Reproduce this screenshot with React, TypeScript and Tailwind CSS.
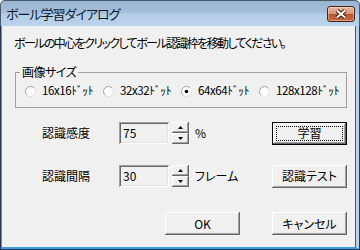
const raised =
  'bg-[#f0f0f0] shadow-[inset_-1px_-1px_#696969,inset_1px_1px_#ffffff,inset_-2px_-2px_#a0a0a0,inset_2px_2px_#f0f0f0]';

function Button({ label, isDefault }: { label: string; isDefault?: boolean }) {
  if (isDefault) {
    return (
      <div className="w-[75px] h-[23px] border border-black">
        <div className={`w-full h-full p-[3px] ${raised}`}>
          <div className="w-full h-full flex items-center justify-center outline outline-1 outline-dotted outline-black -outline-offset-1 leading-none">
            {label}
          </div>
        </div>
      </div>
    );
  }
  return (
    <div className={`w-[75px] h-[23px] flex items-center justify-center leading-none ${raised}`}>{label}</div>
  );
}

function Arrow({ up }: { up?: boolean }) {
  return (
    <svg width="5" height="3" viewBox="0 0 5 3">
      <path d={up ? 'M2.5 0 L5 3 L0 3 Z' : 'M0 0 L5 0 L2.5 3 Z'} fill="#000" />
    </svg>
  );
}

function Spin({ value, label, suffix }: { value: string; label: string; suffix: string }) {
  return (
    <div className="flex items-center h-[24px] ml-[40px]">
      <span className="w-[77px]">{label}</span>
      <div className="w-[50px] h-[22px] bg-[#f0f0f0] flex items-center pl-[4px] shadow-[inset_1px_1px_#a0a0a0,inset_-1px_-1px_#ffffff,inset_2px_2px_#696969,inset_-2px_-2px_#e3e3e3]">
        {value}
      </div>
      <div className="ml-[3px] w-[17px] h-[22px] flex flex-col">
        <div className={`h-[11px] flex items-center justify-center ${raised}`}>
          <Arrow up />
        </div>
        <div className={`h-[11px] flex items-center justify-center ${raised}`}>
          <Arrow />
        </div>
      </div>
      <span className="ml-[6px] w-[77px]">{suffix}</span>
    </div>
  );
}

function Radio({ label, checked }: { label: string; checked?: boolean }) {
  return (
    <div className="w-[78px] flex items-center shrink-0">
      <svg width="11" height="11" viewBox="0 0 11 11" className="shrink-0">
        <circle cx="5.5" cy="5.5" r="5" fill="#ffffff" stroke="#dcdcdc" />
        <path d="M1.96 9.04 A5 5 0 0 1 9.04 1.96" fill="none" stroke="#a8a8a8" />
        {checked && <circle cx="5.5" cy="5.5" r="1.8" fill="#000" />}
      </svg>
      <span className="ml-[6px] whitespace-nowrap text-[11.5px] tracking-[-0.4px]">{label}</span>
    </div>
  );
}

export default function App() {
  return (
    <div className="w-[360px] h-[250px] flex flex-col overflow-hidden text-[12px] text-black font-['Noto_Sans_CJK_JP',sans-serif] [font-feature-settings:'palt']">
      {/* title bar */}
      <div className="h-[26px] shrink-0 flex items-center pl-[5px] pr-[4px] rounded-t-[5px] border border-b-0 border-[#4a5a6c] bg-[linear-gradient(to_bottom,#9ab6d3_0%,#a6bfda_48%,#b5cee8_52%,#bad2eb_100%)]">
        <span className="text-[13px] leading-none tracking-[-1px] text-[#0c1c2c]">ボール学習ダイアログ</span>
        <div className="ml-auto w-[28px] h-[16px] rounded-[3px] border border-[#4a2416] flex items-center justify-center bg-[linear-gradient(to_bottom,#eab9a0_0%,#d99272_48%,#b45630_52%,#c86c44_100%)] shadow-[inset_0_0_0_1px_rgba(255,255,255,0.35)]">
          <svg width="12" height="10" viewBox="0 0 12 10">
            <path d="M2 1.5 L10 8.5 M10 1.5 L2 8.5" stroke="#3a1a10" strokeWidth="4" />
            <path d="M2 1.5 L10 8.5 M10 1.5 L2 8.5" stroke="#ffffff" strokeWidth="2" />
          </svg>
        </div>
      </div>

      {/* frame */}
      <div className="flex-1 flex border-l border-b border-r border-[#233a56]">
        <div className="flex-1 flex border-l border-b-2 border-r-[3px] border-l-[#3c9ddf] border-b-[#3c9ddf] border-r-[#b9d1ea]">
          <div className="flex-1 flex flex-col bg-[#f0f0f0] border-r border-r-[#44556a]">
            <p className="mt-[10px] ml-[12px] h-[14px] leading-[14px] tracking-[-1.6px] whitespace-nowrap">
              ボールの中心をクリックしてボール認識枠を移動してください。
            </p>

            <fieldset className="mt-[14px] ml-[13px] w-[332px] border border-[#a0a0a0]">
              <legend className="ml-[4px] px-[2px] leading-[16px] tracking-[-0.5px]">画像サイズ</legend>
              <div className="flex items-center h-[16px] mt-[3px] mb-[8px] pl-[9px]">
                <Radio label="16x16ﾄﾞｯﾄ" />
                <Radio label="32x32ﾄﾞｯﾄ" />
                <Radio label="64x64ﾄﾞｯﾄ" checked />
                <Radio label="128x128ﾄﾞｯﾄ" />
              </div>
            </fieldset>

            <div className="mt-[13px] flex items-center">
              <Spin label="認識感度" value="75" suffix="%" />
              <Button label="学習" isDefault />
            </div>

            <div className="mt-[19px] flex items-center">
              <Spin label="認識間隔" value="30" suffix="フレーム" />
              <Button label="認識テスト" />
            </div>

            <div className="mt-[24px] ml-[163px] flex gap-[32px]">
              <Button label="OK" />
              <Button label="キャンセル" />
            </div>
          </div>
        </div>
      </div>
    </div>
  );
}
